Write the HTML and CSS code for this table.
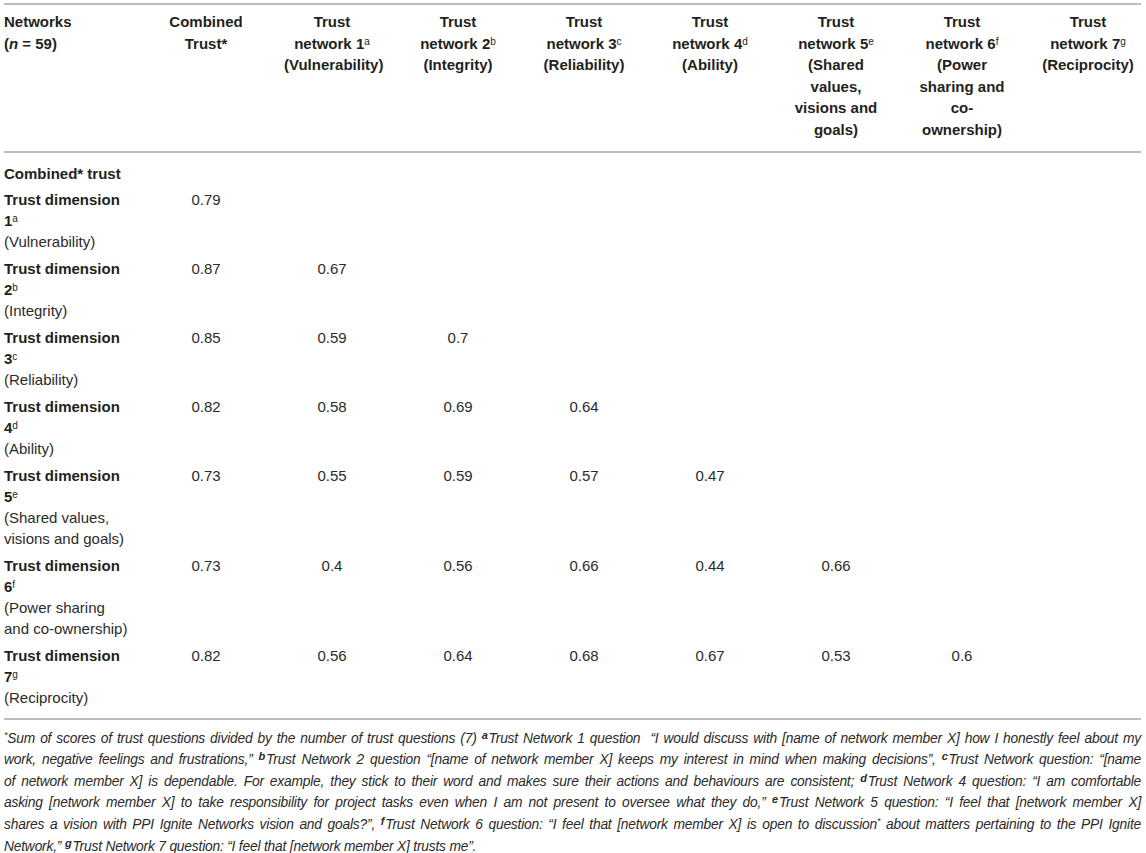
FILE: index.html
```html
<!DOCTYPE html>
<html lang="en">
<head>
<meta charset="utf-8">
<title>Trust network correlations</title>
<link rel="stylesheet" href="styles.css">
</head>
<body>
<div class="page">
  <table class="tbl">
    <colgroup>
      <col class="c-label">
      <col class="c-data"><col class="c-data"><col class="c-data"><col class="c-data">
      <col class="c-data"><col class="c-data"><col class="c-data"><col class="c-data">
    </colgroup>
    <thead>
      <tr>
        <th class="lbl">Networks<br>(<i>n</i> = 59)</th>
        <th>Combined Trust*</th>
        <th>Trust network 1<sup>a</sup> (Vulnerability)</th>
        <th>Trust network 2<sup>b</sup> (Integrity)</th>
        <th>Trust network 3<sup>c</sup> (Reliability)</th>
        <th>Trust network 4<sup>d</sup> (Ability)</th>
        <th>Trust network 5<sup>e</sup> (Shared values, visions and goals)</th>
        <th>Trust network 6<sup>f</sup> (Power sharing and co-ownership)</th>
        <th>Trust network 7<sup>g</sup> (Reciprocity)</th>
      </tr>
    </thead>
    <tbody>
      <tr class="first">
        <td class="lbl"><b>Combined* trust</b></td>
        <td></td><td></td><td></td><td></td><td></td><td></td><td></td><td></td>
      </tr>
      <tr>
        <td class="lbl"><b>Trust dimension 1<sup>a</sup></b><span class="sub">(Vulnerability)</span></td>
        <td>0.79</td><td></td><td></td><td></td><td></td><td></td><td></td><td></td>
      </tr>
      <tr>
        <td class="lbl"><b>Trust dimension 2<sup>b</sup></b><span class="sub">(Integrity)</span></td>
        <td>0.87</td><td>0.67</td><td></td><td></td><td></td><td></td><td></td><td></td>
      </tr>
      <tr>
        <td class="lbl"><b>Trust dimension 3<sup>c</sup></b><span class="sub">(Reliability)</span></td>
        <td>0.85</td><td>0.59</td><td>0.7</td><td></td><td></td><td></td><td></td><td></td>
      </tr>
      <tr>
        <td class="lbl"><b>Trust dimension 4<sup>d</sup></b><span class="sub">(Ability)</span></td>
        <td>0.82</td><td>0.58</td><td>0.69</td><td>0.64</td><td></td><td></td><td></td><td></td>
      </tr>
      <tr>
        <td class="lbl"><b>Trust dimension 5<sup>e</sup></b><span class="sub">(Shared values, visions and goals)</span></td>
        <td>0.73</td><td>0.55</td><td>0.59</td><td>0.57</td><td>0.47</td><td></td><td></td><td></td>
      </tr>
      <tr>
        <td class="lbl"><b>Trust dimension 6<sup>f</sup></b><span class="sub">(Power sharing and co-ownership)</span></td>
        <td>0.73</td><td>0.4</td><td>0.56</td><td>0.66</td><td>0.44</td><td>0.66</td><td></td><td></td>
      </tr>
      <tr class="last">
        <td class="lbl"><b>Trust dimension 7<sup>g</sup></b><span class="sub">(Reciprocity)</span></td>
        <td>0.82</td><td>0.56</td><td>0.64</td><td>0.68</td><td>0.67</td><td>0.53</td><td>0.6</td><td></td>
      </tr>
    </tbody>
  </table>
  <div class="notes">
    <span class="ln"><sup class="ast">*</sup>Sum of scores of trust questions divided by the number of trust questions (7) <sup class="fn">a</sup>Trust Network 1 question &nbsp;“I would discuss with [name of network member X] how I honestly feel about my</span>
    <span class="ln">work, negative feelings and frustrations,” <sup class="fn">b</sup>Trust Network 2 question “[name of network member X] keeps my interest in mind when making decisions”, <sup class="fn">c</sup>Trust Network question: “[name</span>
    <span class="ln">of network member X] is dependable. For example, they stick to their word and makes sure their actions and behaviours are consistent; <sup class="fn">d</sup>Trust Network 4 question: “I am comfortable</span>
    <span class="ln">asking [network member X] to take responsibility for project tasks even when I am not present to oversee what they do,” <sup class="fn">e</sup>Trust Network 5 question: “I feel that [network member X]</span>
    <span class="ln">shares a vision with PPI Ignite Networks vision and goals?”, <sup class="fn">f</sup>Trust Network 6 question: “I feel that [network member X] is open to discussion<sup class="ast">*</sup> about matters pertaining to the PPI Ignite</span>
    <span class="ln end">Network,” <sup class="fn">g</sup>Trust Network 7 question: “I feel that [network member X] trusts me”.</span>
  </div>
</div>
</body>
</html>
```

FILE: styles.css
```css
html, body {
  margin: 0;
  padding: 0;
  background: #ffffff;
}

body {
  font-family: "Liberation Sans", Arial, Helvetica, sans-serif;
  color: #231f20;
}

.page {
  padding: 3px 5px 0 4px;
  width: 1137px;
}

.tbl {
  width: 1137px;
  table-layout: fixed;
  border-collapse: collapse;
  border-top: 2px solid #bcbcbc;
  border-bottom: 2px solid #bcbcbc;
}

.c-label { width: 129px; }
.c-data { width: 126px; }

.tbl th,
.tbl td {
  vertical-align: top;
  text-align: center;
  padding: 3px 5px 3px 25px;
  font-size: 15px;
  line-height: 21px;
}

.tbl th {
  font-weight: bold;
  line-height: 21.6px;
  padding-top: 6px;
  padding-bottom: 10px;
}

.tbl thead tr {
  border-bottom: 2px solid #bcbcbc;
}

.tbl .lbl {
  text-align: left;
  padding-left: 0;
  padding-right: 5px;
}

.tbl td {
  color: #2b2b2b;
}

.tbl td.lbl {
  color: #231f20;
}

.tbl tr.first td {
  padding-top: 10px;
  padding-bottom: 2px;
}

.tbl tr.last td {
  padding-bottom: 10px;
}

.sub {
  display: block;
  font-weight: normal;
  color: #2b2b2b;
}

sup {
  font-size: 10px;
  line-height: 0;
  vertical-align: 4px;
  font-weight: normal;
}

.notes {
  margin-top: 8px;
  font-size: 13.8px;
  line-height: 21.6px;
  font-style: italic;
  color: #2a2a2a;
  letter-spacing: -0.2px;
}

.ln {
  display: block;
  text-align: justify;
  text-align-last: justify;
  white-space: nowrap;
}

.ln.end {
  text-align-last: left;
}

.fn {
  font-weight: bold;
  font-size: 11px;
  vertical-align: 4px;
  margin-right: 1px;
}

.ast {
  font-size: 9px;
  vertical-align: 5px;
}
```
